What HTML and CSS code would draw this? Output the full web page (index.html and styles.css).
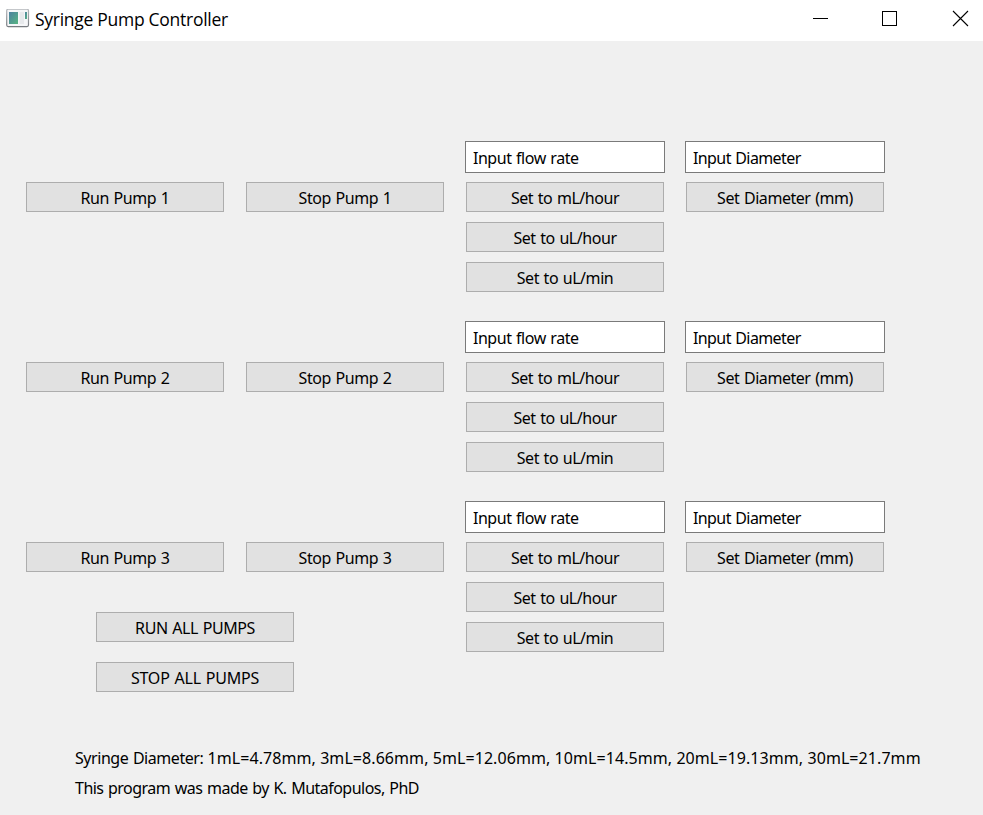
FILE: index.html
```html
<!DOCTYPE html>
<html lang="en">
<head>
<meta charset="utf-8">
<title>Syringe Pump Controller</title>
<link rel="stylesheet" href="styles.css">
</head>
<body>
<header class="titlebar">
  <svg class="app-icon" width="24" height="20" viewBox="0 0 24 20">
    <defs>
      <linearGradient id="pane" x1="0" y1="0" x2="1" y2="1"><stop offset="0" stop-color="#4c80a0"/><stop offset="1" stop-color="#57b582"/></linearGradient>
      <linearGradient id="frame" x1="0" y1="0" x2="0" y2="1"><stop offset="0" stop-color="#b5b8bc"/><stop offset="1" stop-color="#777b80"/></linearGradient>
    </defs>
    <rect x="0.7" y="0.2" width="21.8" height="17.4" rx="1.5" fill="#f5f6f8" stroke="url(#frame)" stroke-width="1.2"/>
    <rect x="3" y="3" width="9" height="12" fill="url(#pane)"/>
    <rect x="13.5" y="3" width="4.5" height="12" fill="#e7e9ec"/>
    <rect x="19" y="3" width="2" height="7" fill="url(#pane)"/>
  </svg>
  <h1 class="title">Syringe Pump Controller</h1>
  <svg class="window-controls" width="160" height="20" viewBox="0 0 160 20" fill="none" stroke="#000" shape-rendering="crispEdges">
    <path d="M1 9.5h15M70.5 2.5h14v14h-14z"/>
    <path d="M141 2l15 15M156 2l-15 15" shape-rendering="auto" stroke-width="1.1"/>
  </svg>
</header>
<main class="panel">
  <section class="run-controls">
    <div class="pump-row"><button>Run Pump 1</button><button>Stop Pump 1</button></div>
    <div class="pump-row"><button>Run Pump 2</button><button>Stop Pump 2</button></div>
    <div class="pump-row"><button>Run Pump 3</button><button>Stop Pump 3</button></div>
    <div class="all-pumps">
      <button class="run-all">RUN ALL PUMPS</button>
      <button class="stop-all">STOP ALL PUMPS</button>
    </div>
  </section>
  <section class="settings">
    <div class="group">
      <div class="field">Input flow rate</div><div class="field diameter">Input Diameter</div>
      <button>Set to mL/hour</button><button>Set Diameter (mm)</button>
      <button>Set to uL/hour</button><span></span>
      <button>Set to uL/min</button>
    </div>
    <div class="group">
      <div class="field">Input flow rate</div><div class="field diameter">Input Diameter</div>
      <button>Set to mL/hour</button><button>Set Diameter (mm)</button>
      <button>Set to uL/hour</button><span></span>
      <button>Set to uL/min</button>
    </div>
    <div class="group">
      <div class="field">Input flow rate</div><div class="field diameter">Input Diameter</div>
      <button>Set to mL/hour</button><button>Set Diameter (mm)</button>
      <button>Set to uL/hour</button><span></span>
      <button>Set to uL/min</button>
    </div>
  </section>
</main>
<footer class="notes">
  <p class="sizes"><span class="label">Syringe Diameter:</span> 1mL=4.78mm, 3mL=8.66mm, 5mL=12.06mm, 10mL=14.5mm, 20mL=19.13mm, 30mL=21.7mm</p>
  <p class="credit">This program was made by K. Mutafopulos, PhD</p>
</footer>
</body>
</html>
```
FILE: styles.css
```css
* { box-sizing: border-box; }
body {
  margin: 0;
  height: 815px;
  overflow: hidden;
  background: #f0f0f0;
  color: #000;
  font: 16px/30px "Noto Sans", sans-serif;
}
.titlebar {
  display: flex;
  height: 41px;
  padding: 9px 11px 0 6px;
  background: #fff;
}
.title {
  margin: 0 auto 0 5px;
  font: 400 17.5px/20px "Open Sans", sans-serif;
  letter-spacing: -0.28px;
  white-space: nowrap;
}
.panel {
  display: flex;
  gap: 22px;
  padding: 101px 26px 0;
  height: 701px;
}
.run-controls { width: 418px; padding-top: 40px; }
.pump-row { display: flex; gap: 22px; height: 180px; }
.pump-row:nth-child(3) { height: 70px; }
.all-pumps {
  display: flex;
  flex-direction: column;
  gap: 20px;
  margin-left: 70px;
}
button {
  width: 198px;
  height: 30px;
  padding: 2px 0 0;
  border: 1px solid #adadad;
  border-radius: 0;
  background: #e1e1e1;
  color: #000;
  font: inherit;
  line-height: 26px;
  letter-spacing: -0.45px;
  word-spacing: 0.9px;
  white-space: nowrap;
}
.run-all { letter-spacing: -0.42px; }
.stop-all { letter-spacing: -0.2px; }
.settings { display: flex; flex-direction: column; gap: 30px; }
.group {
  display: grid;
  grid-template-columns: 198px 198px;
  grid-template-rows: repeat(4, 30px);
  gap: 10px 22px;
}
.field {
  margin: -1px;
  padding: 1px 7px 0;
  border: 1px solid #7a7a7a;
  background: #fff;
  letter-spacing: -0.47px;
  word-spacing: 0.9px;
}
.diameter { letter-spacing: -0.6px; }
.notes { padding-left: 75px; white-space: nowrap; }
.notes p { margin: 0; padding-top: 2px; height: 30px; line-height: 28px; width: max-content; }
.sizes { letter-spacing: 0.07px; }
.label { letter-spacing: -0.45px; word-spacing: 0.9px; }
.credit { letter-spacing: -0.52px; word-spacing: 0.9px; }
```
